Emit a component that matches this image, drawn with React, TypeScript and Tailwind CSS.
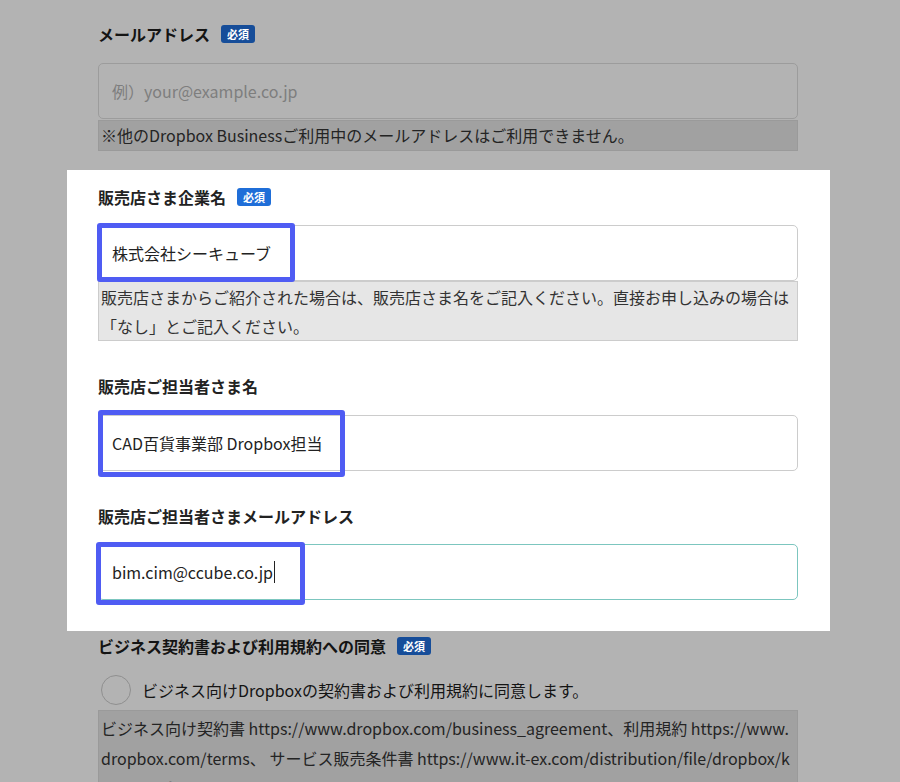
const Badge = ({ dim = false }: { dim?: boolean }) => (
  <span
    className={`ml-[11px] inline-flex h-[18px] items-center rounded-[3px] px-[6px] text-[11px] leading-none text-white ${
      dim ? "bg-[#164d99] text-[#b3b3b3]" : "bg-[#1f6ed8]"
    }`}
  >
    必須
  </span>
);

const Label = ({ text, required = false, dim = false }: { text: string; required?: boolean; dim?: boolean }) => (
  <div className={`flex h-[24px] items-center text-[16px] font-bold ${dim ? "text-[#141414]" : "text-[#222]"}`}>
    <span>{text}</span>
    {required && <Badge dim={dim} />}
  </div>
);

const Mark = ({ className }: { className: string }) => (
  <div className={`pointer-events-none absolute rounded-[3px] border-[5px] border-[#4f5cf3] ${className}`} />
);

export default function App() {
  return (
    <div className="min-h-screen overflow-hidden bg-[#b3b3b3] font-['Noto_Sans_CJK_JP','Noto_Sans',sans-serif]">
      {/* dimmed: email */}
      <div className="px-[98px] pt-[22px]">
        <Label text="メールアドレス" required dim />
        <div className="mt-[17px] flex h-[56px] w-[700px] items-center rounded-[5px] border border-[#9c9c9c] px-[13px] text-[16px] text-[#7e7e7e]">
          例）your@example.co.jp
        </div>
        <div className="mt-px h-[31px] w-[700px] border border-[#9a9a9a] bg-[#a1a1a1] px-[2px] text-[16px] leading-[28px] text-[#242424]">
          ※他のDropbox Businessご利用中のメールアドレスはご利用できません。
        </div>
      </div>

      {/* highlighted */}
      <div className="ml-[67px] mt-[19px] w-[763px] bg-white pb-[31px] pl-[31px] pt-[15px]">
        <Label text="販売店さま企業名" required />
        <div className="relative mt-[16px] flex h-[56px] w-[700px] items-center rounded-[5px] border border-[#cccccc] px-[13px] text-[16px] text-[#222]">
          株式会社シーキューブ
          <Mark className="-left-[2px] -top-[3px] h-[59px] w-[198px]" />
        </div>
        <div className="h-[60px] w-[700px] border border-[#cccccc] bg-[#e6e6e6] px-[2px] py-px text-[16px] leading-[29px] text-[#333]">
          販売店さまからご紹介された場合は、販売店さま名をご記入ください。直接お申し込みの場合は「なし」とご記入ください。
        </div>

        <div className="mt-[33px]">
          <Label text="販売店ご担当者さま名" />
        </div>
        <div className="relative mt-[17px] flex h-[56px] w-[700px] items-center rounded-[5px] border border-[#cccccc] px-[13px] text-[16px] text-[#222]">
          CAD百貨事業部 Dropbox担当
          <Mark className="-left-px -top-[6px] h-[67px] w-[247px]" />
        </div>

        <div className="mt-[33px]">
          <Label text="販売店ご担当者さまメールアドレス" />
        </div>
        <div className="relative mt-[16px] flex h-[56px] w-[700px] items-center rounded-[5px] border border-[#7cc6bf] px-[13px] text-[16px] text-[#222]">
          bim.cim@ccube.co.jp
          <span className="ml-px inline-block h-[22px] w-px bg-[#222]" />
          <Mark className="-left-[3px] -top-[3px] h-[63px] w-[209px]" />
        </div>
      </div>

      {/* dimmed: agreement */}
      <div className="px-[98px] pt-[3px]">
        <Label text="ビジネス契約書および利用規約への同意" required dim />
        <div className="mt-[17px] flex items-center">
          <span className="ml-[3px] h-[30px] w-[30px] rounded-full border border-[#8f8f8f]" />
          <span className="ml-[11px] text-[16px] text-[#141414]">ビジネス向けDropboxの契約書および利用規約に同意します。</span>
        </div>
        <div className="mt-[5px] w-[700px] break-all border border-[#9a9a9a] bg-[#a1a1a1] py-[2px] pl-[2px] pr-[7px] text-[16px] leading-[30px] text-[#242424]">
          ビジネス向け契約書 https://www.dropbox.com/business_agreement、利用規約 https://www.dropbox.com/terms、 サービス販売条件書 https://www.it-ex.com/distribution/file/dropbox/kindex.pdf
        </div>
      </div>
    </div>
  );
}
